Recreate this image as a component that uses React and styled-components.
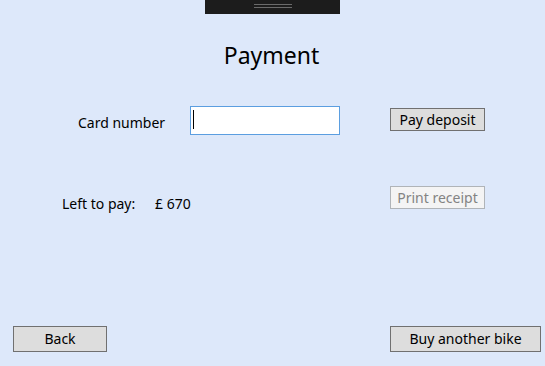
import React from "react";
import styled, { createGlobalStyle } from "styled-components";

const Global = createGlobalStyle`
  html, body { margin: 0; padding: 0; }
  body { background: #dde8fa; }
  * { box-sizing: border-box; }
`;

/* ================= WINDOW ================= */

const Window = styled.div`
  width: 545px;
  height: 366px;
  background: #dde8fa;
  font-family: "Noto Sans", "Open Sans", sans-serif;
  color: #000;
  display: flex;
  flex-direction: column;
  overflow: hidden;
`;

const Handle = styled.div`
  width: 135px;
  height: 14px;
  margin-left: 205px;
  background: #1c1c1c;
  display: flex;
  justify-content: center;
  padding-top: 4px;
`;

const Grip = styled.div`
  width: 38px;
  height: 4px;
  border-top: 1px solid #6a6a6a;
  border-bottom: 1px solid #6a6a6a;
`;

const Title = styled.h1`
  margin: 25px 0 0;
  font-size: 23px;
  font-weight: 400;
  line-height: 32px;
  text-align: center;
  padding-right: 2px;
`;

/* ================= FORM ROWS ================= */

const Row = styled.div`
  display: grid;
  grid-template-columns: ${({ $cols }) => $cols};
  align-items: start;
  margin-top: ${({ $top }) => $top}px;
`;

const Label = styled.span`
  font-size: 14px;
  line-height: 18px;
  margin-top: ${({ $dy }) => $dy || 0}px;
`;

const Input = styled.div`
  width: 150px;
  height: 29px;
  background: #fff;
  border: 1px solid #5b9ee0;
  position: relative;
`;

const Caret = styled.span`
  position: absolute;
  left: 2px;
  top: 3px;
  width: 1px;
  height: 19px;
  background: #000;
`;

const Button = styled.button`
  width: ${({ $w }) => $w}px;
  height: ${({ $h }) => $h || 23}px;
  margin-top: ${({ $dy }) => $dy || 0}px;
  padding: 0 0 1px;
  font-family: inherit;
  font-size: 14px;
  border: 1px solid ${({ disabled }) => (disabled ? "#b0b4b8" : "#707070")};
  background: ${({ disabled }) => (disabled ? "#f4f4f4" : "#dddddd")};
  color: ${({ disabled }) => (disabled ? "#838383" : "#000")};
  border-radius: 0;
`;

/* ================= FOOTER ================= */

const Footer = styled.div`
  margin-top: auto;
  padding: 0 4px 14px 13px;
  display: flex;
  justify-content: space-between;
`;

const App = () => (
  <>
    <Global />
    <Window>
      <Handle>
        <Grip />
      </Handle>
      <Title>Payment</Title>

      <Row $cols="78px 112px 200px auto" $top={35}>
        <span />
        <Label $dy={8}>Card number</Label>
        <Input>
          <Caret />
        </Input>
        <Button $w={95} $dy={2}>Pay deposit</Button>
      </Row>

      <Row $cols="62px 93px 235px auto" $top={51}>
        <span />
        <Label $dy={9}>Left to pay:</Label>
        <Label $dy={9}>£ 670</Label>
        <Button $w={95} disabled>Print receipt</Button>
      </Row>

      <Footer>
        <Button $w={94} $h={26}>Back</Button>
        <Button $w={151} $h={26}>Buy another bike</Button>
      </Footer>
    </Window>
  </>
);

export default App;
